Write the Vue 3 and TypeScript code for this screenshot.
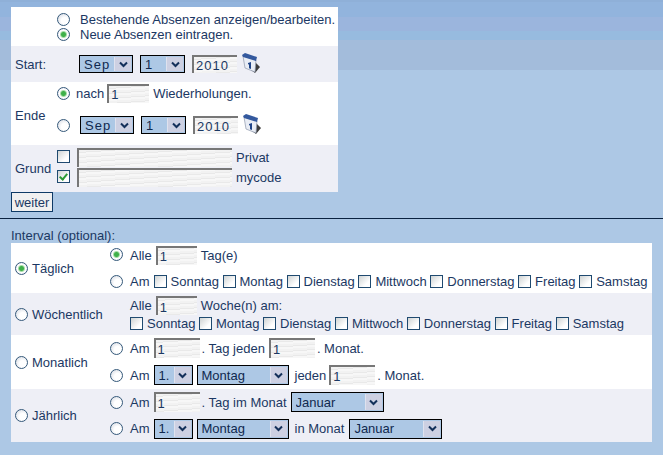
<script setup lang="ts">
const months = ['Januar', 'Februar', 'März', 'April', 'Mai', 'Juni', 'Juli', 'August', 'September', 'Oktober', 'November', 'Dezember']
const days = ['Sonntag', 'Montag', 'Dienstag', 'Mittwoch', 'Donnerstag', 'Freitag', 'Samstag']
const shortMonths = ['Sep']
const dayNumbers = ['1']
const ordinals = ['1.']
</script>

<template>
  <div class="page">
    <form class="panel">
      <div class="row mode">
        <label class="line"><input type="radio" name="mode" /><span class="mode-text">Bestehende Absenzen anzeigen/bearbeiten.</span></label>
        <label class="line"><input type="radio" name="mode" checked /><span class="mode-text">Neue Absenzen eintragen.</span></label>
      </div>

      <div class="row alt start">
        <span class="label">Start:</span>
        <span class="fake-select w-sep wide"><select><option v-for="m in shortMonths" :key="m">{{ m }}</option></select><i class="arrow"><svg width="9" height="7" viewBox="0 0 9 7"><path d="M1 1.5l3.5 3.5L8 1.5" fill="none" stroke="#14305a" stroke-width="2" /></svg></i></span>
        <span class="fake-select w-day wide"><select><option v-for="d in dayNumbers" :key="d">{{ d }}</option></select><i class="arrow"><svg width="9" height="7" viewBox="0 0 9 7"><path d="M1 1.5l3.5 3.5L8 1.5" fill="none" stroke="#14305a" stroke-width="2" /></svg></i></span>
        <input class="text year" value="2010" />
        <svg class="cal" width="20" height="20" viewBox="0 0 20 20">
          <path d="M13 8l6 6-5 6-4-3z" fill="#3c3c3c" />
          <path d="M2 3l13 4-1 12-10-4z" fill="#e9edf5" stroke="#8d97aa" stroke-width=".7" />
          <path d="M1 2l3-2 12 4-1 4L2 4z" fill="#34599e" />
          <path d="M7 10l3-1v7l-2-.7v-4l-1 .3z" fill="#1f4488" />
        </svg>
      </div>

      <div class="row end">
        <span class="end-label">Ende</span>
        <div class="end-lines">
          <label class="line end-first"><input type="radio" name="end" checked /><span class="nach">nach</span><input class="text rep" value="1" /><span class="wdh">Wiederholungen.</span></label>
          <div class="line end-second">
            <input type="radio" name="end" />
            <span class="fake-select w-sep wide"><select><option v-for="m in shortMonths" :key="m">{{ m }}</option></select><i class="arrow"><svg width="9" height="7" viewBox="0 0 9 7"><path d="M1 1.5l3.5 3.5L8 1.5" fill="none" stroke="#14305a" stroke-width="2" /></svg></i></span>
            <span class="fake-select w-day wide"><select><option v-for="d in dayNumbers" :key="d">{{ d }}</option></select><i class="arrow"><svg width="9" height="7" viewBox="0 0 9 7"><path d="M1 1.5l3.5 3.5L8 1.5" fill="none" stroke="#14305a" stroke-width="2" /></svg></i></span>
            <input class="text year" value="2010" />
            <svg class="cal" width="20" height="20" viewBox="0 0 20 20">
              <path d="M13 8l6 6-5 6-4-3z" fill="#3c3c3c" />
              <path d="M2 3l13 4-1 12-10-4z" fill="#e9edf5" stroke="#8d97aa" stroke-width=".7" />
              <path d="M1 2l3-2 12 4-1 4L2 4z" fill="#34599e" />
              <path d="M7 10l3-1v7l-2-.7v-4l-1 .3z" fill="#1f4488" />
            </svg>
          </div>
        </div>
      </div>

      <div class="row alt reason">
        <span class="grund-label">Grund</span>
        <div class="reason-lines">
          <label class="reason-line"><input type="checkbox" /><input class="text reason-input" /><span>Privat</span></label>
          <label class="reason-line"><input type="checkbox" checked /><input class="text reason-input" /><span>mycode</span></label>
        </div>
      </div>
    </form>

    <button class="next" type="button">weiter</button>
    <hr class="rule" />
    <div class="interval-title">Interval (optional):</div>

    <div class="interval">
      <div class="irow r1">
        <label class="kind"><input type="radio" name="kind" checked /><span>Täglich</span></label>
        <div class="ilines">
          <div class="iline h-a"><input type="radio" name="daily" checked /><span class="t">Alle</span><input class="text num" value="1" /><span>Tag(e)</span></div>
          <div class="iline h-b"><input type="radio" name="daily" /><span class="t">Am</span>
            <label v-for="d in days" :key="d" class="day"><input type="checkbox" /><span>{{ d }}</span></label>
          </div>
        </div>
      </div>

      <div class="irow alt r2">
        <label class="kind"><input type="radio" name="kind" /><span>Wöchentlich</span></label>
        <div class="ilines indent">
          <div class="iline h-c"><span class="t">Alle</span><input class="text num" value="1" /><span>Woche(n) am:</span></div>
          <div class="iline h-d">
            <label v-for="d in days" :key="d" class="day"><input type="checkbox" /><span>{{ d }}</span></label>
          </div>
        </div>
      </div>

      <div class="irow r3">
        <label class="kind"><input type="radio" name="kind" /><span>Monatlich</span></label>
        <div class="ilines">
          <div class="iline h-e"><input type="radio" name="monthly" /><span class="t">Am</span><input class="text big" value="1" /><span>. Tag jeden</span><input class="text big" value="1" /><span>. Monat.</span></div>
          <div class="iline h-e"><input type="radio" name="monthly" /><span class="t">Am</span>
            <span class="fake-select w-ord"><select><option v-for="o in ordinals" :key="o">{{ o }}</option></select><i class="arrow"><svg width="9" height="7" viewBox="0 0 9 7"><path d="M1 1.5l3.5 3.5L8 1.5" fill="none" stroke="#14305a" stroke-width="2" /></svg></i></span>
            <span class="fake-select w-wd"><select><option v-for="d in days.slice(1)" :key="d">{{ d }}</option></select><i class="arrow"><svg width="9" height="7" viewBox="0 0 9 7"><path d="M1 1.5l3.5 3.5L8 1.5" fill="none" stroke="#14305a" stroke-width="2" /></svg></i></span>
            <span class="after-sel">jeden</span><input class="text big" value="1" /><span>. Monat.</span></div>
        </div>
      </div>

      <div class="irow alt r4">
        <label class="kind"><input type="radio" name="kind" /><span>Jährlich</span></label>
        <div class="ilines">
          <div class="iline h-e"><input type="radio" name="yearly" /><span class="t">Am</span><input class="text big" value="1" /><span>. Tag im Monat</span>
            <span class="fake-select w-mon"><select><option v-for="m in months" :key="m">{{ m }}</option></select><i class="arrow"><svg width="9" height="7" viewBox="0 0 9 7"><path d="M1 1.5l3.5 3.5L8 1.5" fill="none" stroke="#14305a" stroke-width="2" /></svg></i></span></div>
          <div class="iline h-f"><input type="radio" name="yearly" /><span class="t">Am</span>
            <span class="fake-select w-ord"><select><option v-for="o in ordinals" :key="o">{{ o }}</option></select><i class="arrow"><svg width="9" height="7" viewBox="0 0 9 7"><path d="M1 1.5l3.5 3.5L8 1.5" fill="none" stroke="#14305a" stroke-width="2" /></svg></i></span>
            <span class="fake-select w-wd"><select><option v-for="d in days.slice(1)" :key="d">{{ d }}</option></select><i class="arrow"><svg width="9" height="7" viewBox="0 0 9 7"><path d="M1 1.5l3.5 3.5L8 1.5" fill="none" stroke="#14305a" stroke-width="2" /></svg></i></span>
            <span class="after-sel tight">in Monat</span>
            <span class="fake-select w-mon"><select><option v-for="m in months" :key="m">{{ m }}</option></select><i class="arrow"><svg width="9" height="7" viewBox="0 0 9 7"><path d="M1 1.5l3.5 3.5L8 1.5" fill="none" stroke="#14305a" stroke-width="2" /></svg></i></span></div>
        </div>
      </div>
    </div>
  </div>
</template>

<style>
html, body { margin: 0; background: #adc8e5; }
</style>

<style scoped>
.page {
  box-sizing: border-box;
  width: 663px;
  height: 455px;
  overflow: hidden;
  padding: 7px 11px 0;
  font: 13px/15px "Liberation Sans", Arial, sans-serif;
  color: #1b3863;
  background: linear-gradient(#8fb0d8 0 2px, #92b4dd 2px 17px, #9bb5dd 17px 31px, #97bbdf 31px 40px, #a3bcdb 40px 70px, #adc8e5 70px);
}
.panel { width: 327px; background: #fff; display: flex; flex-direction: column; }
.row { display: flex; align-items: center; box-sizing: border-box; }
.alt { background: #eeeff6; }
.line { display: flex; align-items: center; }

input[type="radio"], input[type="checkbox"] {
  appearance: none;
  margin: 0;
  flex: none;
  box-sizing: border-box;
  position: relative;
}
input[type="radio"] {
  width: 13px;
  height: 13px;
  border: 1px solid #35597a;
  border-radius: 50%;
  background: radial-gradient(circle at 62% 62%, #fff 35%, #cfd4de 100%);
}
input[type="radio"]:checked {
  background: radial-gradient(circle, #3fb04a 0 2px, #a8dca8 3px, #fff 4px, #dde 100%);
}
input[type="checkbox"] {
  width: 13px;
  height: 13px;
  border: 1px solid #1f4a70;
  background: linear-gradient(135deg, #cfd3d3, #fff 70%);
}
input[type="checkbox"]:checked::after {
  content: "";
  position: absolute;
  left: 3px;
  top: 1px;
  width: 3px;
  height: 6px;
  border: solid #2b9a35;
  border-width: 0 2px 2px 0;
  transform: rotate(40deg);
}
input.text {
  box-sizing: border-box;
  flex: none;
  margin: 0;
  padding: 1px 2px 0;
  height: 19px;
  border: 0;
  border-top: 2px solid #777;
  border-left: 2px solid #777;
  font: 13px "Liberation Sans", Arial, sans-serif;
  color: #1b3863;
  background: repeating-linear-gradient(176deg, #f2f2f2 0 2px, #e9e9e9 2px 3px, #f7f7f7 3px 5px);
  outline: none;
}

.fake-select {
  position: relative;
  flex: none;
  box-sizing: border-box;
  display: inline-block;
  height: 18px;
  border: 1px solid #000;
  background: #adc8e5;
}
.fake-select select {
  appearance: none;
  display: block;
  width: 100%;
  height: 100%;
  margin: 0;
  padding: 0 0 0 4px;
  border: 0;
  background: transparent;
  font: 13px "Liberation Sans", Arial, sans-serif;
  color: #10294f;
  outline: none;
}
.wide select { letter-spacing: 1px; }
.arrow {
  position: absolute;
  top: 1px;
  right: 1px;
  bottom: 1px;
  width: 16px;
  display: flex;
  align-items: center;
  justify-content: center;
  background: #cdd0e2;
  border-left: 1px solid #dfe2ee;
  pointer-events: none;
}
.w-sep { width: 54px; }
.w-day { width: 45px; }
.w-ord { width: 39px; height: 20px; }
.w-wd { width: 92px; height: 20px; }
.w-mon { width: 93px; height: 20px; }
input.year { width: 45px; height: 18px; margin-left: 7px; letter-spacing: 1px; }

.mode { height: 39px; flex-direction: column; align-items: flex-start; justify-content: center; padding: 0 0 0 46px; }
.mode .line { height: 15px; }
.mode-text { margin-left: 10px; }

.start { height: 36px; padding-left: 4px; }
.start .label { width: 64px; }
.start .fake-select + .fake-select { margin-left: 7px; }
.cal { flex: none; margin: -3px 0 0 4px; }

.end { height: 63px; padding-left: 4px; }
.end-label { width: 42px; margin-top: 3px; }
.end-lines { display: flex; flex-direction: column; align-self: flex-start; }
.end-first { height: 22px; }
.nach { margin-left: 6px; }
input.rep { width: 42px; margin-left: 3px; }
.wdh { margin-left: 4px; }
.end-second { height: 22px; margin-top: 10px; }
.end-second .fake-select { margin-left: 10px; }
.end-second .fake-select + .fake-select { margin-left: 7px; }

.reason { height: 47px; padding-left: 4px; }
.grund-label { width: 42px; }
.reason-lines { display: flex; flex-direction: column; gap: 1px; margin-top: -2px; }
.reason-line { display: flex; align-items: center; height: 19px; }
.reason-line input[type="checkbox"] { margin-top: -2px; }
input.reason-input { width: 155px; margin: 0 4px 0 7px; }

.next {
  display: block;
  box-sizing: border-box;
  width: 42px;
  height: 20px;
  margin: 0;
  padding: 0;
  border: 1px solid #0e3a66;
  background: #f0f0f0;
  font: 13px "Liberation Sans", Arial, sans-serif;
  color: #1b3863;
}
.rule {
  height: 1px;
  border: 0;
  background: #0a2240;
  margin: 6px -11px 0;
}
.interval-title { margin-top: 9px; height: 15px; }

.interval { width: 641px; background: #fff; }
.irow { display: flex; align-items: center; box-sizing: border-box; padding-left: 4px; }
.r1 { height: 50px; }
.r2 { height: 42px; }
.r3 { height: 54px; }
.r4 { height: 53px; }
.kind { display: flex; align-items: center; width: 95px; flex: none; }
.kind span { margin-left: 4px; }
.ilines { display: flex; flex-direction: column; align-self: flex-start; }
.indent { padding-top: 2px; margin-left: 20px; }
.iline { display: flex; align-items: center; white-space: nowrap; }
.h-a { height: 22px; }
.h-a > span { margin-top: 3px; }
.h-b { height: 30px; margin-top: 1px; }
.h-c { height: 21px; }
.h-d { height: 15px; }
.h-e { height: 26px; }
.h-e + .h-e { margin-top: 1px; }
.h-f { height: 27px; }
.iline > .t { margin-left: 7px; }
.indent .iline > .t { margin-left: 0; }
input.num { width: 41px; margin: 0 4px 0 4px; }
.h-a input.num { margin-top: 2px; }
input.big { width: 46px; height: 20px; margin: 0 2px 0 4px; }
.day { display: flex; align-items: center; margin-right: 3.6px; }
.day span { margin-left: 4px; }
.h-b .t { margin-right: 4px; }
.h-e .fake-select, .h-f .fake-select { margin-left: 4px; }
.after-sel { margin: 0 0 0 6px; }
.after-sel + input.big { margin-left: 3px; }
.after-sel.tight { margin-right: 1px; }
</style>
